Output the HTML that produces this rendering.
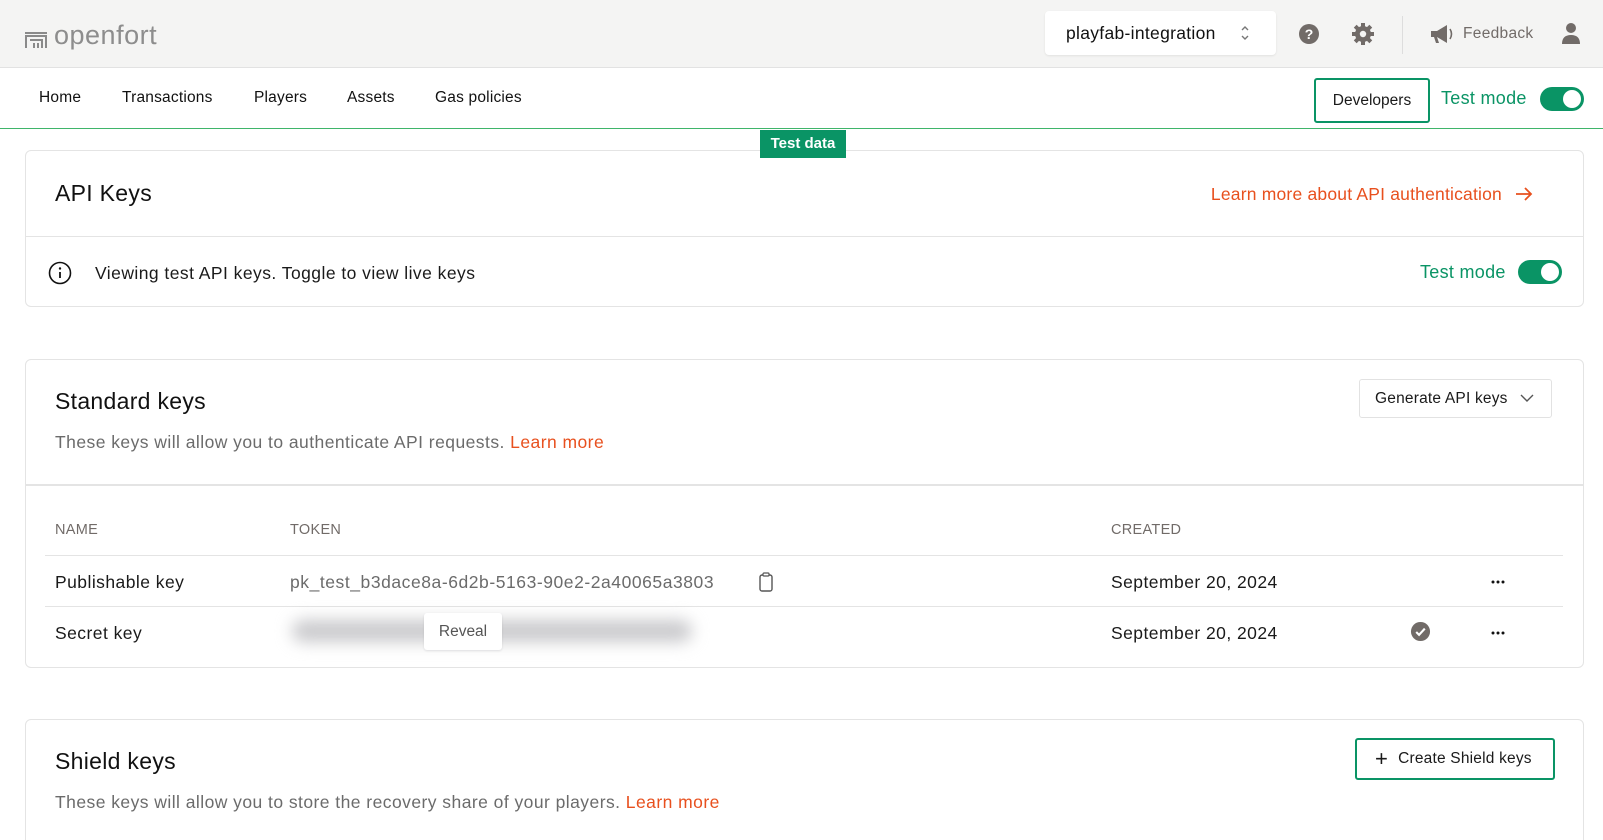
<!DOCTYPE html>
<html><head><meta charset="utf-8"><style>
*{box-sizing:border-box;margin:0;padding:0}
html{width:1603px;height:840px;overflow:hidden}
body{width:1603px;height:840px;overflow:hidden;background:#fff;font-family:"Liberation Sans",sans-serif;color:#1a1a1a;position:relative}
.a{position:absolute}
.top{left:0;top:0;width:1603px;height:68px;background:#f4f4f3;border-bottom:1px solid #e2e2e2}
.nav{left:0;top:68px;width:1603px;height:61px;border-bottom:1px solid #3fb56a}
.navi{font-size:15.5px;top:89px;color:#111;letter-spacing:.2px}
.card{left:25px;width:1559px;border:1px solid #e4e4e4;border-radius:6px;background:#fff}
.h{font-size:23px;color:#111;letter-spacing:.3px}
.g{color:#0a9465}
.tog{width:44px;height:24px;border-radius:12px;background:#0a9465}
.tog:after{content:"";position:absolute;right:3px;top:3px;width:18px;height:18px;border-radius:50%;background:#fff}
.or{color:#e8501e}
.hl{background:#e4e4e4;height:1px}
.t{font-size:17.5px;letter-spacing:.45px}
</style></head><body>
<div class="a top"></div>
<svg class="a" style="left:24px;top:31px" width="24" height="18" viewBox="0 0 24 18"><path d="M1 2h22M1 5h22M2 5v12M22 5v12M6 9h12v8M10 12v5M14 12v5" stroke="#8a8a8a" stroke-width="2" fill="none"/></svg>
<div class="a" style="left:54px;top:20px;font-size:27px;color:#8d8d8d;letter-spacing:.5px">openfort</div>
<div class="a" style="left:1045px;top:11px;width:231px;height:44px;background:#fff;border-radius:4px;box-shadow:0 1px 2px rgba(0,0,0,.08)"></div>
<div class="a" style="left:1066px;top:23px;font-size:17.5px;color:#111;letter-spacing:.3px">playfab-integration</div>
<svg class="a" style="left:1240px;top:25px" width="10" height="16" viewBox="0 0 10 16"><path d="M2 5l3-3 3 3M2 11l3 3 3-3" stroke="#777" stroke-width="1.4" fill="none"/></svg>
<svg class="a" style="left:1298px;top:23px" width="22" height="22" viewBox="0 0 22 22"><circle cx="11" cy="11" r="10" fill="#716b68"/><text x="11" y="16" font-size="14" font-weight="bold" fill="#fff" text-anchor="middle" font-family="Liberation Sans">?</text></svg>
<svg class="a" style="left:1351px;top:22px" width="24" height="24" viewBox="0 0 24 24"><g fill="#716b68"><circle cx="12" cy="12" r="8"/><g stroke="#716b68" stroke-width="4"><path d="M12 1v22M1 12h22M4.2 4.2l15.6 15.6M19.8 4.2L4.2 19.8"/></g></g><circle cx="12" cy="12" r="3.2" fill="#f4f4f3"/></svg>
<div class="a" style="left:1402px;top:16px;width:1px;height:38px;background:#ddd"></div>
<svg class="a" style="left:1429px;top:23px" width="26" height="22" viewBox="0 0 26 22"><path d="M2 8h6l10-6v18L8 14H2z M5 14l2 6h3l-2-6" fill="#716b68"/><path d="M21 6q3 5 0 10" stroke="#716b68" stroke-width="1.6" fill="none"/></svg>
<div class="a" style="left:1463px;top:25px;font-size:15.5px;color:#716b68;letter-spacing:.3px">Feedback</div>
<svg class="a" style="left:1561px;top:22px" width="20" height="24" viewBox="0 0 20 24"><circle cx="10" cy="6" r="5" fill="#716b68"/><path d="M1 22q0-9 9-9t9 9z" fill="#716b68"/></svg>
<div class="a nav"></div>
<div class="a navi" style="left:39px">Home</div>
<div class="a navi" style="left:122px">Transactions</div>
<div class="a navi" style="left:254px">Players</div>
<div class="a navi" style="left:347px">Assets</div>
<div class="a navi" style="left:435px">Gas policies</div>
<div class="a" style="left:1314px;top:78px;width:116px;height:45px;border:2px solid #0a9465;border-radius:3px;font-size:15.5px;text-align:center;line-height:41px">Developers</div>
<div class="a g" style="left:1441px;top:88px;font-size:18px;letter-spacing:.3px">Test mode</div>
<div class="a tog" style="left:1540px;top:87px"></div>
<div class="a card" style="top:150px;height:157px"></div>
<div class="a" style="left:760px;top:130px;width:86px;height:28px;background:#0a9465;color:#fff;font-size:15px;text-align:center;line-height:28px;font-weight:bold">Test data</div>
<div class="a h" style="left:55px;top:180px">API Keys</div>
<div class="a or" style="right:101px;top:184px;font-size:17.5px;letter-spacing:.2px;white-space:nowrap">Learn more about API authentication</div>
<svg class="a" style="left:1515px;top:186px" width="18" height="16" viewBox="0 0 18 16"><path d="M1 8h15M10 2l6 6-6 6" stroke="#e8501e" stroke-width="1.8" fill="none"/></svg>
<div class="a hl" style="left:26px;top:236px;width:1557px"></div>
<svg class="a" style="left:48px;top:261px" width="24" height="24" viewBox="0 0 24 24"><circle cx="12" cy="12" r="10.5" stroke="#111" stroke-width="1.6" fill="none"/><path d="M12 11v6" stroke="#111" stroke-width="1.8"/><circle cx="12" cy="7.5" r="1.2" fill="#111"/></svg>
<div class="a t" style="left:95px;top:263px">Viewing test API keys. Toggle to view live keys</div>
<div class="a g" style="left:1420px;top:262px;font-size:18px;letter-spacing:.3px">Test mode</div>
<div class="a tog" style="left:1518px;top:260px"></div>

<div class="a card" style="top:359px;height:309px"></div>
<div class="a h" style="left:55px;top:388px">Standard keys</div>
<div class="a t" style="left:55px;top:432px;color:#6b6b6b">These keys will allow you to authenticate API requests. <span class="or">Learn more</span></div>
<div class="a" style="left:1359px;top:379px;width:193px;height:39px;border:1px solid #e2e2e2;border-radius:3px;font-size:15.5px;line-height:37px;padding-left:15px;letter-spacing:.2px">Generate API keys</div>
<svg class="a" style="left:1519px;top:393px" width="16" height="10" viewBox="0 0 16 10"><path d="M2 2l6 6 6-6" stroke="#555" stroke-width="1.4" fill="none"/></svg>
<div class="a" style="left:26px;top:484px;width:1557px;height:2px;background:#e4e4e4"></div>
<div class="a" style="left:55px;top:522px;font-size:14.5px;color:#716b68;letter-spacing:.3px">NAME</div>
<div class="a" style="left:290px;top:522px;font-size:14.5px;color:#716b68;letter-spacing:.3px">TOKEN</div>
<div class="a" style="left:1111px;top:522px;font-size:14.5px;color:#716b68;letter-spacing:.3px">CREATED</div>
<div class="a hl" style="left:45px;top:555px;width:1518px"></div>
<div class="a hl" style="left:45px;top:606px;width:1518px"></div>
<div class="a t" style="left:55px;top:572px">Publishable key</div>
<div class="a t" style="left:290px;top:572px;color:#6b6b6b;letter-spacing:.55px">pk_test_b3dace8a-6d2b-5163-90e2-2a40065a3803</div>
<svg class="a" style="left:758px;top:572px" width="16" height="20" viewBox="0 0 16 20"><rect x="2" y="3" width="12" height="16" rx="2" stroke="#555" stroke-width="1.4" fill="none"/><rect x="5" y="1" width="6" height="3" rx="1" stroke="#555" stroke-width="1.2" fill="#fff"/></svg>
<div class="a t" style="left:1111px;top:572px">September 20, 2024</div>
<svg class="a" style="left:1491px;top:580px" width="14" height="4"><circle cx="2" cy="2" r="1.5" fill="#111"/><circle cx="7" cy="2" r="1.5" fill="#111"/><circle cx="12" cy="2" r="1.5" fill="#111"/></svg>
<div class="a t" style="left:55px;top:623px">Secret key</div>
<div class="a" style="left:292px;top:620px;width:400px;height:22px;border-radius:11px;background:#c9c9cc;filter:blur(8px)"></div>
<div class="a" style="left:424px;top:613px;width:78px;height:37px;background:#fff;border-radius:3px;box-shadow:0 1px 2px rgba(0,0,0,.1);font-size:15.5px;color:#555;text-align:center;line-height:37px">Reveal</div>
<div class="a t" style="left:1111px;top:623px">September 20, 2024</div>
<svg class="a" style="left:1410px;top:621px" width="21" height="21" viewBox="0 0 22 22"><circle cx="11" cy="11" r="10" fill="#716b68"/><path d="M6.5 11.5l3 3 6-6.5" stroke="#fff" stroke-width="2.2" fill="none"/></svg>
<svg class="a" style="left:1491px;top:631px" width="14" height="4"><circle cx="2" cy="2" r="1.5" fill="#111"/><circle cx="7" cy="2" r="1.5" fill="#111"/><circle cx="12" cy="2" r="1.5" fill="#111"/></svg>

<div class="a card" style="top:719px;height:130px"></div>
<div class="a h" style="left:55px;top:748px">Shield keys</div>
<div class="a t" style="left:55px;top:792px;color:#6b6b6b">These keys will allow you to store the recovery share of your players. <span class="or">Learn more</span></div>
<div class="a" style="left:1355px;top:738px;width:200px;height:42px;border:2px solid #0a9465;border-radius:3px;font-size:15.5px;line-height:38px;padding-left:18px;letter-spacing:.2px"><span style="font-size:22px;vertical-align:-3px;margin-right:10px">+</span>Create Shield keys</div>
</body></html>
